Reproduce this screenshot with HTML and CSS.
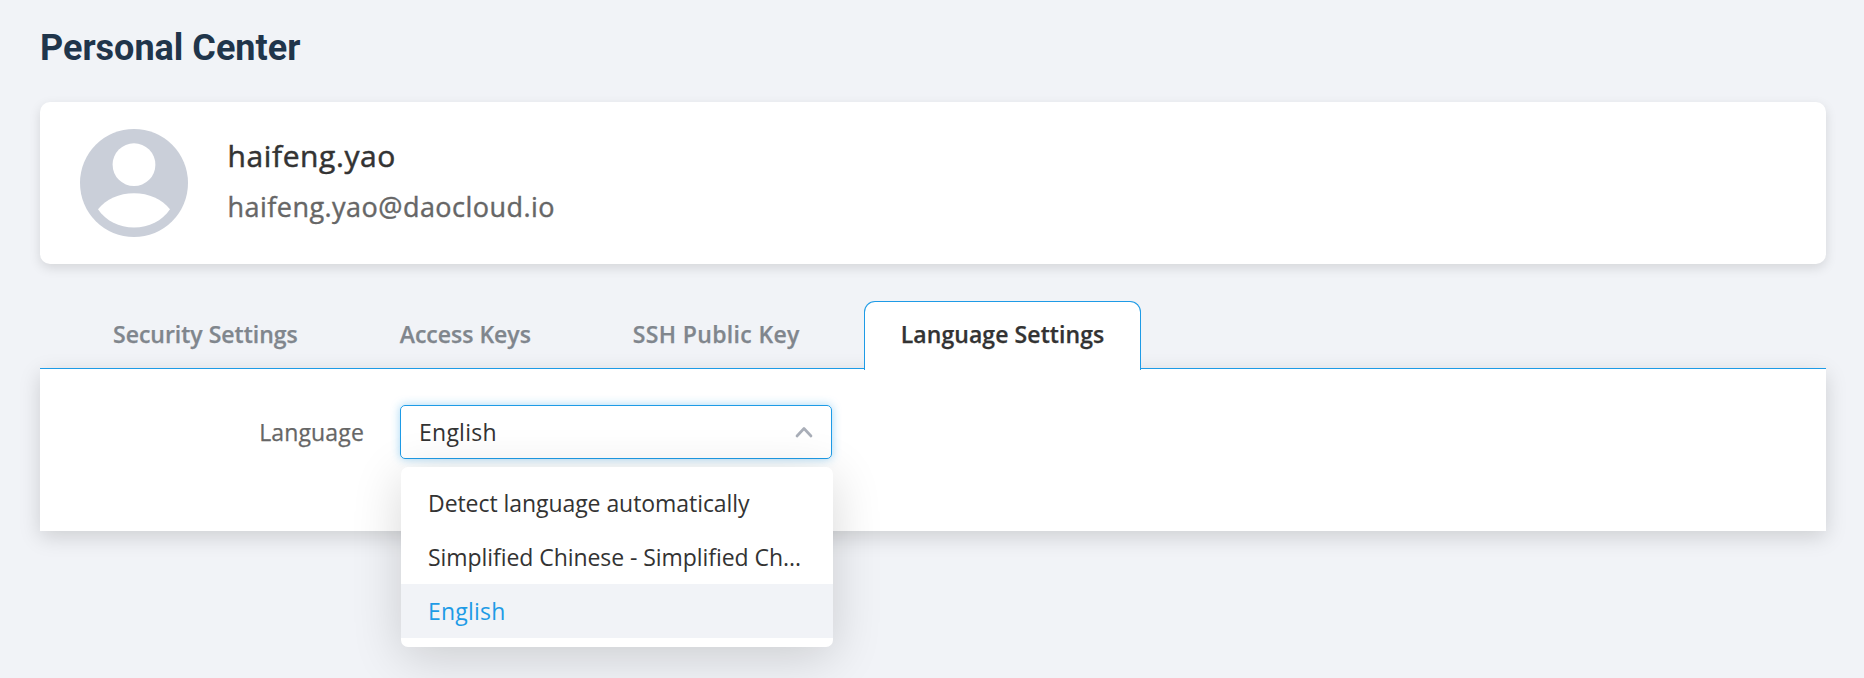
FILE: index.html
```html
<!DOCTYPE html>
<html lang="en">
<head>
<meta charset="utf-8">
<title>Personal Center</title>
<link rel="stylesheet" href="styles.css">
</head>
<body>
<main class="page">
  <h1 class="title">Personal Center</h1>
  <section class="profile">
    <svg class="avatar" viewBox="0 0 108 108" aria-hidden="true">
      <circle cx="54" cy="54" r="54" fill="#cacfd9"/>
      <circle cx="54" cy="35.700" r="21.400" fill="#fff"/>
      <path d="M18 80.300C26 70 39 64.200 54 64.200s28 5.800 36 16.100C82 92 69 98.500 54 98.500S26 92 18 80.300z" fill="#fff"/>
    </svg>
    <div class="identity">
      <div class="name">haifeng.yao</div>
      <div class="email">haifeng.yao@daocloud.io</div>
    </div>
  </section>
  <nav class="tabs">
    <a class="tab">Security Settings</a>
    <a class="tab">Access Keys</a>
    <a class="tab tab-ssh">SSH Public Key</a>
    <a class="tab active">Language Settings</a>
  </nav>
  <section class="panel">
    <label class="label">Language</label>
    <div class="select">
      <span class="value">English</span>
      <svg class="chevron" viewBox="0 0 18 12" aria-hidden="true"><path d="M2 10l7-7.500 7 7.500" fill="none" stroke="#a9aeb8" stroke-width="2.700" stroke-linecap="round" stroke-linejoin="round"/></svg>
      <ul class="menu">
        <li class="option">Detect language automatically</li>
        <li class="option">Simplified Chinese - Simplified Ch...</li>
        <li class="option selected">English</li>
      </ul>
    </div>
  </section>
</main>
</body>
</html>
```
FILE: styles.css
```css
* { box-sizing: border-box; }
body { margin: 0; height: 678px; overflow: hidden; background: #f1f3f7; color: #333; font-family: "Open Sans", "Noto Sans", sans-serif; font-size: 23px; white-space: nowrap; }
.page { padding: 24px 38px 0 40px; }
.title { margin: 0; height: 78px; font: 700 36px/48px Roboto, sans-serif; color: #20354b; }
.profile { height: 162px; display: flex; align-items: center; gap: 40px; padding: 0 39.5px; background: #fff; border-radius: 10px; box-shadow: 0 4px 12px rgba(0,0,0,.12); }
.avatar { width: 108px; height: 108px; margin-top: -1px; }
.identity { display: flex; flex-direction: column; gap: 11px; margin-top: -5px; }
.name { font-size: 30px; line-height: 41px; letter-spacing: .6px; -webkit-text-stroke: .5px #333; }
.email { font-size: 27px; line-height: 40px; letter-spacing: .46px; color: #666; -webkit-text-stroke: .4px #666; }
.tabs { height: 68px; margin-top: 36px; display: flex; padding-left: 36px; position: relative; z-index: 1; }
.tab { height: 68px; line-height: 68px; padding: 0 37px; color: #80868d; font-weight: 600; -webkit-text-stroke: .25px; }
.tab + .tab { margin-left: 28px; }
.tab.tab-ssh { letter-spacing: .34px; }
.tab.active { height: 69px; margin-top: 1px; margin-left: 27px; padding: 0 36px; line-height: 65px; letter-spacing: .09px; border: 1px solid #1e9be6; border-bottom: 0; border-radius: 11px 11px 0 0; background: #fff; color: #333; }
.panel { height: 163px; padding: 36px 0 0; display: flex; background: #fff; border-top: 1px solid #1e9be6; box-shadow: 0 6px 20px rgba(0,0,0,.15); }
.label { width: 324px; line-height: 54px; letter-spacing: .15px; text-align: right; color: #666; -webkit-text-stroke: .25px #666; }
.select { position: relative; width: 432px; height: 54px; margin-left: 36px; padding: 0 18px; display: flex; align-items: center; justify-content: space-between; border: 1px solid #1e9be6; border-radius: 5px; box-shadow: 0 0 10px rgba(30,155,230,.4); }
.value { letter-spacing: .25px; }
.chevron { width: 18px; height: 12px; }
.menu { position: absolute; top: 61px; left: -.5px; width: 432px; height: 180px; margin: 0; padding: 9px 0; list-style: none; background: #fff; border-radius: 7px; box-shadow: 0 10px 50px rgba(0,0,0,.16); }
.option { height: 54px; line-height: 54px; padding-left: 27.5px; letter-spacing: -.06px; }
.option.selected { background: #f1f3f7; color: #1e9be6; letter-spacing: .2px; }
```
